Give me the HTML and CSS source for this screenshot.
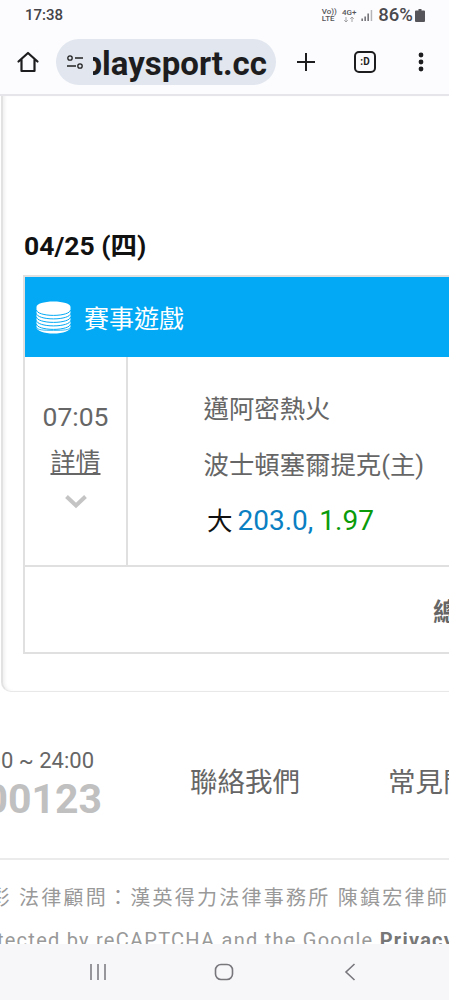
FILE: index.html
```html
<!DOCTYPE html>
<html lang="zh-Hant">
<head>
<meta charset="utf-8">
<title>playsport.cc</title>
<link rel="stylesheet" href="styles.css">
</head>
<body>
<div class="phone">
  <header class="chrome">
    <div class="status">
      <span class="clock">17:38</span>
      <div class="status-right">
        <span class="volte">Vo))<br>LTE</span>
        <span class="net">4G+<svg class="arrows" width="12" height="5" viewBox="0 0 12 5"><path d="M3 0v5M1.200 3.200 3 5l1.800-1.800M9 5V0M7.200 1.800 9 0l1.800 1.800" fill="none" stroke="#9a9a9e" stroke-width=".9"/></svg></span>
        <svg class="signal" width="12" height="11" viewBox="0 0 12 11"><path d="M.5 8.500h1.300V11H.5zM3.500 6.500h1.300V11H3.500zM6.500 3.500h1.300V11H6.500z" fill="#55555a"/><path d="M9.700 0h1.500v11H9.700z" fill="#b5b5b9"/></svg>
        <span class="battery-text">86%</span>
        <svg class="battery" width="10" height="13" viewBox="0 0 10 13"><path d="M3.500 0h3v1.400h2.500a1 1 0 0 1 1 1V12a1 1 0 0 1-1 1H1a1 1 0 0 1-1-1V2.400a1 1 0 0 1 1-1h2.500z" fill="#55555a"/></svg>
      </div>
    </div>
    <div class="toolbar">
      <svg class="tb-home" width="24" height="24" viewBox="0 0 24 24"><path d="M2.500 11.500 12 3l9.500 8.500M5.500 9.500V21h13V9.500" fill="none" stroke="#1d1d20" stroke-width="2.200" stroke-linejoin="round" stroke-linecap="round"/></svg>
      <div class="omnibox">
        <svg class="tune" width="18" height="15" viewBox="0 0 18 15"><circle cx="4" cy="3" r="2.200" fill="none" stroke="#222" stroke-width="1.300"/><path d="M9 3h8M1 11h9" stroke="#222" stroke-width="1.300"/><circle cx="14" cy="11" r="2.200" fill="none" stroke="#222" stroke-width="1.300"/></svg>
        <div class="url-clip"><span class="url">playsport.cc</span></div>
      </div>
      <svg class="tb-plus" width="20" height="20" viewBox="0 0 20 20"><path d="M10 1v18M1 10h18" stroke="#1d1d20" stroke-width="2"/></svg>
      <span class="tabs">:D</span>
      <svg class="tb-more" width="6" height="20" viewBox="0 0 6 20"><circle cx="3" cy="3" r="2.400" fill="#1d1d20"/><circle cx="3" cy="10" r="2.400" fill="#1d1d20"/><circle cx="3" cy="17" r="2.400" fill="#1d1d20"/></svg>
    </div>
  </header>

  <main class="page">
    <section class="card">
      <h2 class="date">04/25 (四)</h2>
      <div class="game-table">
        <div class="game-head">
          <svg class="coins" width="35" height="33" viewBox="0 0 35 33">
            <path d="M.5 6C.5 2.800 8 .5 17.500.5S34.500 2.800 34.500 6v20.500c0 3.300-7.500 6-17 6s-17-2.700-17-6z" fill="#fff"/>
            <g fill="none" stroke="#03a9f4" stroke-width="1">
              <path d="M.5 9c0 3 7.500 5.400 17 5.400s17-2.400 17-5.400"/>
              <path d="M.5 12.500c0 3 7.500 5.400 17 5.400s17-2.400 17-5.400"/>
              <path d="M.5 16c0 3 7.500 5.400 17 5.400s17-2.400 17-5.400"/>
              <path d="M.5 19.500c0 3 7.500 5.400 17 5.400s17-2.400 17-5.400"/>
              <path d="M.5 23c0 3 7.500 5.400 17 5.400s17-2.400 17-5.400"/>
              <path d="M.5 26c0 3 7.500 3.400 17 3.400s17-.4 17-3.400" stroke-width=".8"/>
            </g>
          </svg>
          <span class="game-title">賽事遊戲</span>
        </div>
        <div class="game-row">
          <div class="time-cell">
            <span class="time">07:05</span>
            <span class="detail">詳情</span>
            <svg class="chev" width="24" height="15" viewBox="0 0 24 15"><path d="M2.500 2.500 12 11.500l9.500-9" fill="none" stroke="#c4c4c4" stroke-width="4"/></svg>
          </div>
          <div class="info-cell">
            <span class="team">邁阿密熱火</span>
            <span class="team">波士頓塞爾提克(主)</span>
            <span class="odds"><span class="ou">大</span><span class="line">203.0,</span><span class="price">1.97</span></span>
          </div>
        </div>
        <div class="total-row"><b class="total">總計</b></div>
      </div>
    </section>

    <footer class="foot">
      <div class="foot-links">
        <div class="service">
          <span class="hours">09:00 ~ 24:00</span>
          <b class="phone-no">0800-000123</b>
        </div>
        <span class="foot-link">聯絡我們</span>
        <span class="foot-link">常見問題</span>
      </div>
      <div class="legal">
        <div class="legal-line line-end"><span class="legal-text">版權所有 玩運彩 法律顧問：漢英得力法律事務所 陳鎮宏律師</span></div>
        <div class="legal-line line-start"><span class="legal-text recaptcha">protected by reCAPTCHA and the Google <b>Privacy Policy</b></span></div>
      </div>
    </footer>
  </main>

  <nav class="navbar">
    <svg class="nav-recent" width="20" height="18" viewBox="0 0 20 18"><path d="M3 1v16M10 1v16M17 1v16" stroke="#77777c" stroke-width="1.500"/></svg>
    <svg class="nav-home" width="20" height="18" viewBox="0 0 20 18"><rect x="1.500" y="1.500" width="17" height="15" rx="5.500" fill="none" stroke="#77777c" stroke-width="1.600"/></svg>
    <svg class="nav-back" width="12" height="18" viewBox="0 0 12 18"><path d="M10.500 1 2 9l8.500 8" fill="none" stroke="#77777c" stroke-width="1.600"/></svg>
  </nav>
</div>
</body>
</html>
```

FILE: styles.css
```css
* { box-sizing: border-box; }
html, body { margin: 0; padding: 0; }
body {
  font-family: Roboto, "Noto Sans CJK TC", sans-serif;
  background: #fff;
}
.phone {
  width: 449px;
  height: 1000px;
  overflow: hidden;
  display: flex;
  flex-direction: column;
  background: #fff;
}
.chrome {
  height: 96px;
  flex: none;
  background: #fcfcfe;
  border-bottom: 2px solid #e6e6ea;
}
.status {
  height: 30px;
  display: flex;
  align-items: center;
  justify-content: space-between;
  padding: 0 24px 0 25px;
}
.clock { font-size: 15px; font-weight: 500; color: #444448; }
.status-right { display: flex; align-items: center; }
.volte { font-size: 8px; line-height: 7px; font-weight: 500; color: #55555a; margin-right: 5px; }
.net { display: flex; flex-direction: column; align-items: center; font-size: 8px; line-height: 8px; font-weight: 500; color: #55555a; margin-right: 5px; }
.arrows { display: block; }
.signal { margin-right: 5px; }
.battery-text { font-size: 18.500px; font-weight: 500; color: #4a4a4e; margin-right: 2px; }
.toolbar {
  height: 64px;
  display: flex;
  align-items: center;
  padding: 0 0 0 16px;
}
.omnibox {
  width: 220px;
  height: 46px;
  margin-left: 16px;
  border-radius: 23px;
  background: #e1e6ef;
  display: flex;
  align-items: center;
  padding: 0 9px 0 10px;
  flex: none;
}
.tune { flex: none; margin-right: 9px; }
.url-clip {
  flex: 1;
  min-width: 0;
  overflow: hidden;
  display: flex;
  justify-content: flex-end;
  white-space: nowrap;
  padding-top: 2px;
}
.url { font-size: 33px; font-weight: 700; color: #1d1d20; flex: none; }
.tb-plus { margin-left: 20px; flex: none; }
.tabs {
  flex: none;
  width: 22px;
  height: 22px;
  margin-left: 38px;
  border: 2px solid #1d1d20;
  border-radius: 5px;
  font-size: 10px;
  font-weight: 700;
  line-height: 18px;
  text-align: center;
  color: #1d1d20;
}
.tb-more { margin-left: 42px; flex: none; }

.page { flex: 1; min-height: 0; overflow: hidden; }
.card {
  width: 480px;
  height: 596px;
  border: 2px solid #e2e2e2;
  border-top: 0;
  border-right: 0;
  border-bottom: 1px solid #e8e8e8;
  border-radius: 0 0 0 10px;
  padding: 136px 0 0 20px;
  margin-left: 1px;
  box-shadow: inset 3px 0 3px -1px #f1f1f1;
}
.date {
  margin: 0 0 0 1px;
  font-size: 26.500px;
  line-height: 28px;
  font-weight: 700;
  color: #111;
}
.game-table {
  margin-top: 15px;
  width: 470px;
  border: 2px solid #e0e0e0;
  height: 379px;
  display: flex;
  flex-direction: column;
}
.game-head {
  height: 80px;
  flex: none;
  background: #03a9f4;
  display: flex;
  align-items: center;
  padding-left: 11px;
  gap: 13px;
}
.game-title { font-size: 25px; color: #fff; }
.game-row {
  height: 210px;
  flex: none;
  display: flex;
  border-bottom: 2px solid #e0e0e0;
}
.time-cell {
  width: 103px;
  flex: none;
  border-right: 2px solid #e0e0e0;
  display: flex;
  flex-direction: column;
  align-items: center;
  padding-top: 42px;
}
.time { font-size: 26.500px; line-height: 36px; color: #666; }
.detail { font-size: 25px; line-height: 36px; margin-top: 10px; color: #666; text-decoration: underline; }
.chev { margin-top: 13px; }
.info-cell {
  flex: 1;
  display: flex;
  flex-direction: column;
  padding: 34px 0 0 75.500px;
}
.team { font-size: 25.400px; line-height: 36px; color: #666; margin-bottom: 20px; white-space: nowrap; }
.odds { font-size: 28px; line-height: 36px; padding-left: 3.500px; white-space: nowrap; }
.ou { color: #111; font-size: 25.500px; margin-right: 5px; }
.line { color: #0a7fc2; margin-right: 6px; }
.price { color: #0a9b0a; }
.total-row { flex: 1; display: flex; align-items: center; padding-left: 408px; }
.total { font-size: 25px; color: #666; white-space: nowrap; }

.foot { padding-top: 55px; }
.foot-links { display: flex; height: 113px; border-bottom: 2px solid #ebebeb; }
.service {
  width: 102px;
  flex: none;
  overflow: hidden;
  display: flex;
  flex-direction: column;
  align-items: flex-end;
  white-space: nowrap;
}
.hours { font-size: 22px; line-height: 28px; color: #666; flex: none; margin-right: 8px; }
.phone-no { font-size: 41px; line-height: 48px; color: #c0c0c0; flex: none; }
.foot-link { font-size: 27.500px; line-height: 36px; color: #666; margin-left: 88px; white-space: nowrap; flex: none; padding-top: 18px; }
.legal { padding-top: 22px; }
.legal-line { display: flex; overflow: hidden; white-space: nowrap; height: 42px; }
.line-end { justify-content: flex-end; }
.line-start { justify-content: flex-start; }
.legal-text { font-size: 20px; line-height: 32px; color: #999; letter-spacing: 2.250px; flex: none; }
.recaptcha { letter-spacing: 1.250px; margin-left: -36px; }
.legal-text b { color: #777; }
.navbar {
  position: absolute;
  left: 0;
  top: 944px;
  width: 449px;
  height: 56px;
  background: #f7f7fa;
  display: flex;
  align-items: center;
  padding-left: 88px;
}
.nav-home { margin-left: 106px; }
.nav-back { margin-left: 110px; }
```
